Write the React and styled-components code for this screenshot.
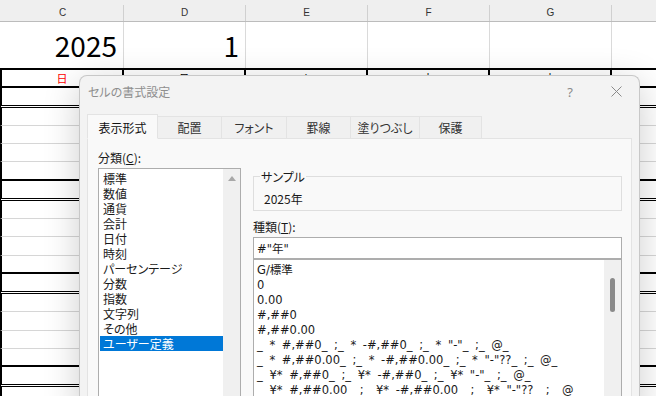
import React from 'react';
import styled, { createGlobalStyle } from 'styled-components';

const GlobalStyle = createGlobalStyle`
  html, body {
    margin: 0;
    padding: 0;
    overflow: hidden;
    background: #ffffff;
  }
  body {
    font-family: "Noto Sans CJK JP", "Noto Sans", sans-serif;
  }
`;

// the sixth column (H) starts just inside the window's right edge; its text lies off screen
const COLUMNS = ['C', 'D', 'E', 'F', 'G', ''];
const VALUES = ['2025', '1', '', '', '', ''];
const DAYS = ['日', '月', '火', '水', '木', ''];

// one week block of the calendar: the row under the dates, three note rows and a closing row
const BLOCK = [
  { h: 20.2, line: 'double' },
  { h: 18.1, line: 'thin' },
  { h: 18.1, line: 'thin' },
  { h: 18.1, line: 'thin' },
  { h: 18.6, line: 'thick' },
];
const BODY_ROWS = [...BLOCK, ...BLOCK, ...BLOCK, ...BLOCK];

const CATEGORIES = [
  '標準', '数値', '通貨', '会計', '日付', '時刻', 'パーセンテージ',
  '分数', '指数', '文字列', 'その他', 'ユーザー定義',
];

const FORMATS = [
  'G/標準',
  '0',
  '0.00',
  '#,##0',
  '#,##0.00',
  '_ * #,##0_ ;_ * -#,##0_ ;_ * "-"_ ;_ @_ ',
  '_ * #,##0.00_ ;_ * -#,##0.00_ ;_ * "-"??_ ;_ @_ ',
  '_ ¥* #,##0_ ;_ ¥* -#,##0_ ;_ ¥* "-"_ ;_ @_ ',
  '_ ¥* #,##0.00_ ;_ ¥* -#,##0.00_ ;_ ¥* "-"??_ ;_ @_ ',
];

const TABS = [
  { label: '表示形式', w: 71 },
  { label: '配置', w: 65 },
  { label: 'フォント', w: 66 },
  { label: '罫線', w: 65 },
  { label: '塗りつぶし', w: 70 },
  { label: '保護', w: 63 },
];

/* ---------- sheet ---------- */

const Page = styled.div`
  position: relative;
  width: 656px;
  height: 396px;
  overflow: hidden;
`;

const ColumnHeader = styled.div`
  display: flex;
  height: 22px;
  box-sizing: border-box;
  padding: 5px 0 0 2px;
  background: #efefef;
  border-bottom: 1px solid #bcbcbc;
`;

const ColumnLabel = styled.div`
  flex: 0 0 122px;
  box-sizing: border-box;
  border-right: 1px solid #d0d0d0;
  text-align: center;
  font: 10px/16px "Liberation Sans", Arial, sans-serif;
  color: #333333;
`;

const ValueRow = styled.div`
  display: flex;
  height: 46px;
  padding-left: 2px;
`;

const ValueCell = styled.div`
  flex: 0 0 122px;
  box-sizing: border-box;
  display: flex;
  align-items: center;
  justify-content: flex-end;
  padding-right: 6px;
  border-right: 1px solid #dadada;
  font-size: 28px;
  color: #000000;
`;

const WeekRow = styled.div`
  display: flex;
  height: 20px;
  box-sizing: border-box;
  border-top: 2px solid #000000;
  border-bottom: 2px solid #000000;
  border-left: 2px solid #000000;
`;

const DayCell = styled.div`
  flex: 0 0 122px;
  box-sizing: border-box;
  display: flex;
  align-items: center;
  justify-content: center;
  border-right: 2px solid #000000;
  font-size: 11px;
  color: ${({ $sunday }) => ($sunday ? '#ff0000' : '#000000')};
`;

const LINES = {
  thin: '1px solid #d6d6d6',
  double: '3px double #000000',
  thick: '2px solid #000000',
};

const BodyRow = styled.div`
  display: flex;
  box-sizing: border-box;
  border-left: 2px solid #000000;
  border-bottom: ${({ $line }) => LINES[$line]};
`;

const BodyCell = styled.div`
  flex: 0 0 122px;
  box-sizing: border-box;
  border-right: 2px solid #000000;
`;

/* ---------- dialog ---------- */

const Dialog = styled.div`
  position: absolute;
  left: 79px;
  top: 75px;
  width: 561px;
  height: 340px;
  box-sizing: border-box;
  display: flex;
  flex-direction: column;
  background: #f3f3f3;
  border: 1px solid #c8c8c8;
  border-bottom: none;
  border-radius: 8px 8px 0 0;
  box-shadow: 0 8px 36px rgba(0, 0, 0, 0.2);
  font-family: "Noto Sans CJK JP", sans-serif;
  font-feature-settings: "palt";
  font-size: 12px;
  color: #1a1a1a;
`;

const TitleBar = styled.div`
  display: flex;
  align-items: center;
  height: 31px;
  padding-left: 8px;
`;

const TitleText = styled.div`
  flex: 1;
  font-size: 12px;
  color: #8e8e8e;
`;

const TitleButton = styled.div`
  width: 46px;
  height: 31px;
  display: flex;
  align-items: center;
  justify-content: center;
  font: 13px "Noto Sans", sans-serif;
  color: #8a8a8a;
`;

const TabRow = styled.div`
  display: flex;
  align-items: flex-end;
  height: 25px;
  margin: 7px 7px -1px;
`;

const Tab = styled.div`
  position: relative;
  z-index: ${({ $active }) => ($active ? 2 : 1)};
  width: ${({ $w }) => $w}px;
  height: ${({ $active }) => ($active ? 25 : 23)}px;
  box-sizing: border-box;
  margin-left: -1px;
  display: flex;
  align-items: center;
  justify-content: center;
  padding-top: ${({ $active }) => ($active ? 1 : 0)}px;
  background: ${({ $active }) => ($active ? '#f9f9f9' : '#f0f0f0')};
  border: 1px solid #e3e3e3;
  border-bottom-color: ${({ $active }) => ($active ? '#f9f9f9' : '#e3e3e3')};
  color: ${({ $active }) => ($active ? '#111111' : '#333333')};

  &:first-child {
    margin-left: 0;
  }
`;

const Panel = styled.div`
  flex: 1;
  margin: 0 7px;
  display: grid;
  grid-template-columns: 143px 369px;
  column-gap: 12px;
  align-items: start;
  padding: 11px 9px 0 10px;
  background: #f9f9f9;
  border: 1px solid #e3e3e3;
`;

const Column = styled.div`
  display: flex;
  flex-direction: column;
  margin-top: ${({ $offset }) => $offset || 0}px;
`;

const FieldLabel = styled.div`
  line-height: 15px;
  margin: ${({ $gap }) => $gap || 0}px 0 3px;
`;

const ListBox = styled.div`
  display: flex;
  height: ${({ $h }) => $h}px;
  background: #ffffff;
  border: 1px solid #adadad;
`;

const CategoryList = styled.div`
  flex: 1;
  padding: 2px 0 0 1px;
`;

const CategoryItem = styled.div`
  height: 15px;
  line-height: 15px;
  padding-left: 3px;
  white-space: nowrap;
  background: ${({ $selected }) => ($selected ? '#0078d7' : 'transparent')};
  color: ${({ $selected }) => ($selected ? '#ffffff' : '#1a1a1a')};
`;

const ScrollTrack = styled.div`
  flex: 0 0 17px;
  display: flex;
  flex-direction: column;
  align-items: center;
  padding-top: ${({ $top }) => $top}px;
  background: #f0f0f0;
`;

const UpArrow = styled.div`
  width: 0;
  height: 0;
  border-left: 4px solid transparent;
  border-right: 4px solid transparent;
  border-bottom: 5px solid #a8a8a8;
`;

const Thumb = styled.div`
  width: 4.5px;
  height: 34px;
  border-radius: 3px;
  background: #8a8a8a;
`;

const Group = styled.fieldset`
  margin: 0;
  min-width: 0;
  padding: 7px 10px 4px;
  border: 1px solid #dedede;
`;

const GroupTitle = styled.legend`
  margin-left: -4px;
  padding: 0 1px;
  line-height: 15px;
`;

const SampleText = styled.div`
  line-height: 15px;
`;

const TextBox = styled.div`
  display: flex;
  align-items: center;
  height: 22px;
  box-sizing: border-box;
  padding-left: 3px;
  background: #ffffff;
  border: 1px solid #adadad;
  font: 11.5px "DejaVu Sans", "Noto Sans CJK JP", sans-serif;
`;

const FormatList = styled.div`
  flex: 1;
  padding: 3px 0 0 3px;
  font: 11.5px/15px "DejaVu Sans", "Noto Sans CJK JP", sans-serif;
  word-spacing: 3px;
  white-space: pre;
  overflow: hidden;
`;

const CloseIcon = () => (
  <svg width="11" height="11" viewBox="0 0 11 11">
    <path d="M0.5 0.5 L10.5 10.5 M10.5 0.5 L0.5 10.5" stroke="#8a8a8a" strokeWidth="1" fill="none" />
  </svg>
);

const FormatDialog = () => (
  <Dialog>
    <TitleBar>
      <TitleText>セルの書式設定</TitleText>
      <TitleButton>?</TitleButton>
      <TitleButton><CloseIcon /></TitleButton>
    </TitleBar>

    <TabRow>
      {TABS.map((t, i) => (
        <Tab key={t.label} $w={t.w} $active={i === 0}>{t.label}</Tab>
      ))}
    </TabRow>

    <Panel>
      <Column>
        <FieldLabel>分類(<u>C</u>):</FieldLabel>
        <ListBox $h={240}>
          <CategoryList>
            {CATEGORIES.map((c) => (
              <CategoryItem key={c} $selected={c === 'ユーザー定義'}>{c}</CategoryItem>
            ))}
          </CategoryList>
          <ScrollTrack $top={6.5}>
            <UpArrow />
          </ScrollTrack>
        </ListBox>
      </Column>

      <Column $offset={19}>
        <Group>
          <GroupTitle>サンプル</GroupTitle>
          <SampleText>2025年</SampleText>
        </Group>
        <FieldLabel $gap={8}>種類(<u>T</u>):</FieldLabel>
        <TextBox>#"年"</TextBox>
        <ListBox $h={150}>
          <FormatList>
            {FORMATS.map((f) => (
              <div key={f}>{f}</div>
            ))}
          </FormatList>
          <ScrollTrack $top={17.8}>
            <Thumb />
          </ScrollTrack>
        </ListBox>
      </Column>
    </Panel>
  </Dialog>
);

export default function App() {
  return (
    <>
      <GlobalStyle />
      <Page>
        <ColumnHeader>
          {COLUMNS.map((c, i) => <ColumnLabel key={i}>{c}</ColumnLabel>)}
        </ColumnHeader>
        <ValueRow>
          {VALUES.map((v, i) => <ValueCell key={i}>{v}</ValueCell>)}
        </ValueRow>
        <WeekRow>
          {DAYS.map((d, i) => <DayCell key={i} $sunday={i === 0}>{d}</DayCell>)}
        </WeekRow>
        {BODY_ROWS.map((r, i) => (
          <BodyRow key={i} $line={r.line} style={{ height: r.h }}>
            {DAYS.map((d, j) => <BodyCell key={j} />)}
          </BodyRow>
        ))}
        <FormatDialog />
      </Page>
    </>
  );
}
